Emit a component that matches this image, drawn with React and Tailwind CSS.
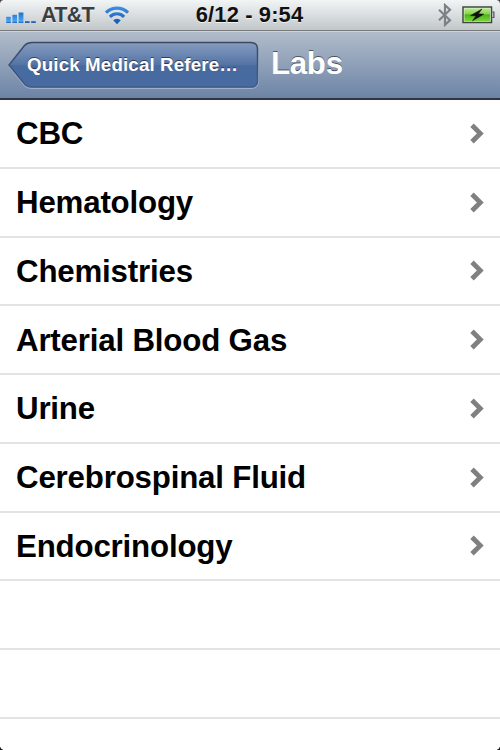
import React from 'react';

const sections = [
    'CBC',
    'Hematology',
    'Chemistries',
    'Arterial Blood Gas',
    'Urine',
    'Cerebrospinal Fluid',
    'Endocrinology',
    '',
    '',
    '',
];

const SignalIcon = () => (
    <svg className="mt-[3px]" width="31" height="13" viewBox="0 0 31 13" fill="url(#signal)">
        <defs>
            <linearGradient id="signal" gradientUnits="userSpaceOnUse" x1="0" y1="1" x2="0" y2="13">
                <stop offset="0" stopColor="#1c66c4" />
                <stop offset="0.85" stopColor="#4aa6f2" />
                <stop offset="1" stopColor="#1c5ab4" />
            </linearGradient>
        </defs>
        <rect x="0.2" y="6.8" width="4.6" height="6.2" />
        <rect x="6.4" y="4.8" width="4.6" height="8.2" />
        <rect x="12.6" y="2.5" width="4.8" height="10.5" />
        <rect x="19" y="11.2" width="4.6" height="1.8" fill="#2560b4" />
        <rect x="25.2" y="11.2" width="4.6" height="1.8" fill="#2560b4" />
    </svg>
);

const WifiIcon = () => (
    <svg width="26" height="20" viewBox="0 0 26 20" fill="none" stroke="url(#wifi)" strokeWidth="3.1">
        <defs>
            <linearGradient id="wifi" gradientUnits="userSpaceOnUse" x1="0" y1="0" x2="0" y2="20">
                <stop offset="0" stopColor="#3e97e8" />
                <stop offset="1" stopColor="#1550b0" />
            </linearGradient>
        </defs>
        <path d="M2 7.7a15.4 15.4 0 0 1 22 0" />
        <path d="M5.9 11.8a9.9 9.9 0 0 1 14.2 0" />
        <path d="M9.2 15.3a5.3 5.3 0 0 1 7.6 0L13 19.2Z" fill="url(#wifi)" stroke="none" />
    </svg>
);

const BluetoothIcon = () => (
    <svg width="14" height="24" viewBox="0 0 14 24" fill="none" stroke="#7d8185" strokeWidth="2.2">
        <path d="M1 6.8L12 17.2L7 21.8V2.2L12 6.8L1 17.2" />
    </svg>
);

const BatteryIcon = () => (
    <svg width="34" height="18" viewBox="0 0 34 18">
        <defs>
            <linearGradient id="charge" x1="0" y1="0" x2="0" y2="1">
                <stop offset="0" stopColor="#b9ea91" />
                <stop offset="0.45" stopColor="#83d347" />
                <stop offset="0.5" stopColor="#4cb414" />
                <stop offset="1" stopColor="#79d33c" />
            </linearGradient>
        </defs>
        <rect x="1" y="1" width="28.5" height="15.5" fill="#e7f3e0" stroke="#3f4a3c" strokeWidth="1.5" />
        <rect x="2.4" y="2.4" width="25.7" height="12.7" fill="url(#charge)" />
        <path d="M30.2 6h1.7v5.5h-1.7" fill="#b9bfc2" stroke="#50585a" strokeWidth="1.2" />
        <path d="M20 3L8.5 9.6L14 10L10.5 14.8L21.8 8.2L16.4 7.7Z" fill="#111" stroke="#111" strokeWidth="0.5" />
    </svg>
);

const StatusBar = () => (
    <div className="flex h-[31px] items-center border-b border-[#77797b] bg-linear-to-b from-[#f2f5f6] to-[#c1c7c9] pr-[4px] pl-[6px] text-[#111]">
        <div className="flex flex-1 items-center">
            <SignalIcon />
            <span className="ml-[4px] pt-px text-[21.5px] leading-[29px] tracking-[-0.7px] text-[#3b3d3f] [text-shadow:0_1px_0_rgba(255,255,255,0.7)]">AT&amp;T</span>
            <span className="ml-[10px]"><WifiIcon /></span>
        </div>
        <span className="mr-[3px] pb-px text-[21.875px] leading-[29px] tracking-[0.15px] [text-shadow:0_1px_0_rgba(255,255,255,0.7)]">6/12 - 9:54</span>
        <div className="flex flex-1 items-center justify-end gap-[10px]">
            <BluetoothIcon />
            <BatteryIcon />
        </div>
    </div>
);

const BackButton = ({ label }) => (
    <button className="relative h-[48px] w-[251px] shrink-0 pl-[19px] text-left">
        <svg className="absolute inset-0" width="251" height="48" viewBox="0 0 251 48">
            <defs>
                <linearGradient id="back" x1="0" y1="0" x2="0" y2="1">
                    <stop offset="0" stopColor="#869cbf" />
                    <stop offset="0.5" stopColor="#5474a6" />
                    <stop offset="0.52" stopColor="#486a9f" />
                    <stop offset="1" stopColor="#476ba2" />
                </linearGradient>
                <linearGradient id="backEdge" x1="0" y1="0" x2="0" y2="1">
                    <stop offset="0" stopColor="#3c4a60" />
                    <stop offset="1" stopColor="#3e5c8c" />
                </linearGradient>
            </defs>
            <path d="M1 25.5L16.5 45Q19.5 47.5 24 47.5H243Q250.3 47.5 250.3 40V10" fill="none" stroke="#a3b2c9" strokeWidth="1" />
            <path d="M1 24L16.5 4.5Q19.5 1.5 24 1.5H243Q249.5 1.5 249.5 8.5V39Q249.5 46 243 46H24Q19.5 46 16.5 43Z" fill="url(#back)" stroke="url(#backEdge)" strokeWidth="1.5" />
        </svg>
        <span className="relative block text-[18.75px] leading-[46px] tracking-[0.13px] whitespace-nowrap text-white [text-shadow:0_-1.5px_0_rgba(0,0,0,0.5)]">{label}</span>
    </button>
);

const NavBar = () => (
    <div className="flex h-[69px] items-center border-t border-b-2 border-t-[#ccd5df] border-b-[#2d3642] bg-linear-to-b from-[#b1bcca] to-[#6d84a6] pl-[8px]">
        <BackButton label="Quick Medical Refere…" />
        <h1 className="ml-[12px] pb-[2px] text-[31.25px] leading-[62px] tracking-[-0.3px] text-white [text-shadow:0_-1.5px_0_rgba(0,0,0,0.5)]">Labs</h1>
    </div>
);

const Row = ({ label }) => (
    <li className="flex h-[68.75px] shrink-0 items-center justify-between border-b-2 border-[#e3e3e3] pr-[16px] pl-[16px]">
        <span className="pt-px text-[31.25px] leading-[63px] tracking-[-0.18px] text-black">{label}</span>
        {label && (
            <svg width="14" height="21" viewBox="0 0 14 21" fill="none" stroke="#808080" strokeWidth="4.8">
                <path d="M2 2.2L10.3 10.5L2 18.8" />
            </svg>
        )}
    </li>
);

const App = () => {
    return (
        <div className="relative flex h-[750px] w-[500px] flex-col overflow-hidden bg-white font-['Liberation_Sans',sans-serif] font-bold">
            <StatusBar />
            <NavBar />
            <ul className="flex flex-1 flex-col overflow-hidden">
                {sections.map((label, index) => (
                    <Row key={index} label={label} />
                ))}
            </ul>

            {/* Dark screen corners */}
            <span className="absolute top-0 left-0 size-[3px] bg-[radial-gradient(circle_at_100%_100%,transparent_2px,#333_3.5px)]" />
            <span className="absolute top-0 right-0 size-[3px] bg-[radial-gradient(circle_at_0%_100%,transparent_2px,#333_3.5px)]" />
            <span className="absolute bottom-0 left-0 size-[3px] bg-[radial-gradient(circle_at_100%_0%,transparent_2px,#111_3px)]" />
            <span className="absolute right-0 bottom-0 size-[3px] bg-[radial-gradient(circle_at_0%_0%,transparent_2px,#111_3px)]" />
        </div>
    );
};

export default App;
